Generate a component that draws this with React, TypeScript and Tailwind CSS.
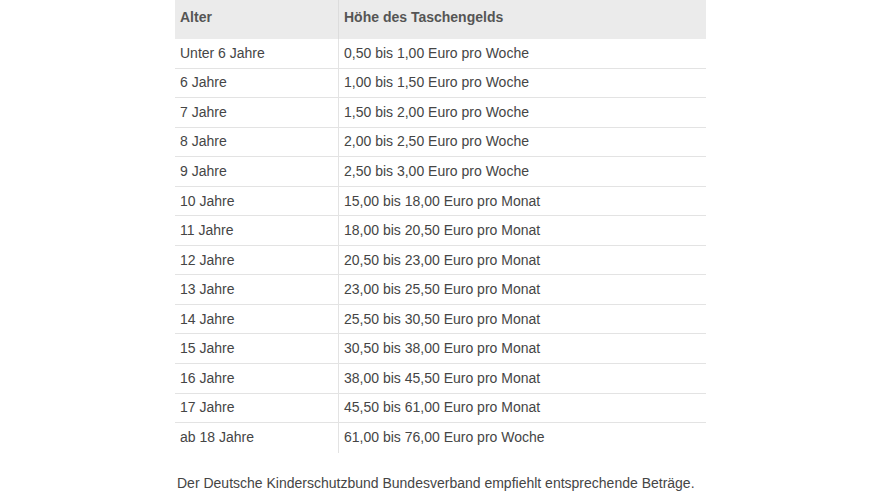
const rows: [string, string][] = [
  ["Unter 6 Jahre", "0,50 bis 1,00 Euro pro Woche"],
  ["6 Jahre", "1,00 bis 1,50 Euro pro Woche"],
  ["7 Jahre", "1,50 bis 2,00 Euro pro Woche"],
  ["8 Jahre", "2,00 bis 2,50 Euro pro Woche"],
  ["9 Jahre", "2,50 bis 3,00 Euro pro Woche"],
  ["10 Jahre", "15,00 bis 18,00 Euro pro Monat"],
  ["11 Jahre", "18,00 bis 20,50 Euro pro Monat"],
  ["12 Jahre", "20,50 bis 23,00 Euro pro Monat"],
  ["13 Jahre", "23,00 bis 25,50 Euro pro Monat"],
  ["14 Jahre", "25,50 bis 30,50 Euro pro Monat"],
  ["15 Jahre", "30,50 bis 38,00 Euro pro Monat"],
  ["16 Jahre", "38,00 bis 45,50 Euro pro Monat"],
  ["17 Jahre", "45,50 bis 61,00 Euro pro Monat"],
  ["ab 18 Jahre", "61,00 bis 76,00 Euro pro Woche"],
];

export default function App() {
  return (
    <div className="w-[873px] h-[494px] bg-white font-['Liberation_Sans',Arial,sans-serif] text-[#454545] overflow-hidden">
      <div className="ml-[175px] w-[531px]">
        {/* Tabelle */}
        <div className="flex h-[39px] bg-[#ebebeb] font-bold text-[14px] text-[#555]">
          <div className="w-[164px] border-r border-[#dcdcdc] flex items-center pl-[5px] pb-[4px]">Alter</div>
          <div className="flex-1 flex items-center pl-[5px] pb-[4px]">Höhe des Taschengelds</div>
        </div>
        {rows.map(([age, amount], i) => (
          <div
            key={i}
            className={`flex h-[29.55px] text-[14px] ${i < rows.length - 1 ? "border-b border-[#e3e3e3]" : ""}`}
          >
            <div className="w-[164px] border-r border-[#e3e3e3] flex items-center pl-[5px]">{age}</div>
            <div className="flex-1 flex items-center pl-[5px]">{amount}</div>
          </div>
        ))}
        <p className="mt-[20px] ml-[2px] text-[14px] leading-[20px] whitespace-nowrap">
          Der Deutsche Kinderschutzbund Bundesverband empfiehlt entsprechende Beträge.
        </p>
      </div>
    </div>
  );
}
